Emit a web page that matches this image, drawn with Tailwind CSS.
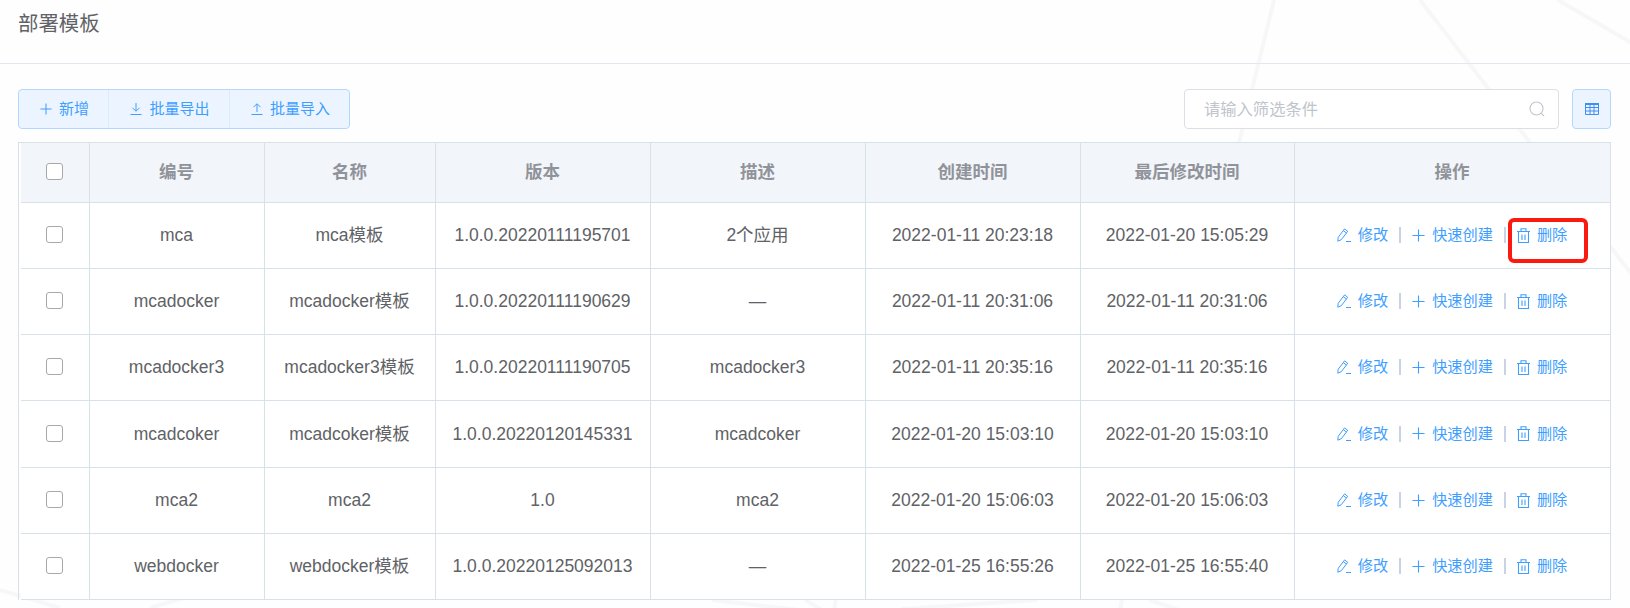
<!DOCTYPE html>
<html lang="zh-CN">
<head>
    <meta charset="UTF-8">
    <title>部署模板</title>
    <script src="https://cdn.jsdelivr.net/npm/@tailwindcss/browser@4"></script>
</head>
<body class="bg-[#fefefe] font-['Liberation_Sans','Noto_Sans_CJK_SC',sans-serif] text-[#606266] overflow-hidden">

    <!-- icons -->
    <svg class="hidden">
        <symbol id="i-edit" viewBox="0 0 14 14"><path fill="none" stroke="currentColor" stroke-width="1" d="M.8 13.2 1.2 9.3 7.6.9l3.1 2.4-6.4 8.4zM6.3 2.6l3.1 2.4M9 13.5h5"/></symbol>
        <symbol id="i-plus" viewBox="0 0 14 14"><path fill="none" stroke="currentColor" stroke-width="1.2" d="M7 .5v13M.5 7h13"/></symbol>
        <symbol id="i-trash" viewBox="0 0 13 15"><path fill="none" stroke="currentColor" stroke-width="1.1" d="M0 3.5h13M1.5 3.5v11h10v-11M4 3.5V.8h5v2.7M5 6.5v5.5M8 6.5v5.5"/></symbol>
    </svg>

    <div class="relative w-[1630px] h-[608px]">
        <!-- faint background lines -->
        <svg class="absolute inset-0 pointer-events-none" width="1630" height="608" fill="none" stroke="#f7f7f7" stroke-width="4">
            <path d="M1274 0 1225 200M1420 0 1640 285M1558 0 1640 48M0 590 60 608M150 608 190 596M712 600 800 610M805 600 822 610M836 600 834 610M902 609 1037 600M1122 600 1120 610M1149 600 1179 610"/>
        </svg>

        <div class="relative">
            <header class="h-[64px] border-b border-[#e4e7ed] pl-[18px] pt-[9px]">
                <h1 class="text-[20.4px] leading-[30px] font-normal">部署模板</h1>
            </header>

            <div class="px-[18px] pt-[25px]">
                <!-- toolbar -->
                <div class="flex items-center justify-between w-[1593px] h-[40px]">
                    <div class="flex h-[40px] text-[15px] text-[#409eff] bg-[#ecf5ff] border border-[#b3d8ff] rounded-[4px]">
                        <button class="flex items-center gap-[7px] w-[90px] pl-[2px] justify-center border-r border-[#d9ecff]">
                            <svg class="w-[12px] h-[12px]"><use href="#i-plus"/></svg>新增
                        </button>
                        <button class="flex items-center gap-[7px] w-[121px] pl-[2px] justify-center border-r border-[#d9ecff]">
                            <svg class="w-[12px] h-[12px]" viewBox="0 0 12 12" fill="none" stroke="currentColor"><path d="M6 0v8M2.5 4.8 6 8.3l3.5-3.5M.5 11.5h11"/></svg>批量导出
                        </button>
                        <button class="flex items-center gap-[7px] w-[119px] pl-[2px] justify-center">
                            <svg class="w-[12px] h-[12px]" viewBox="0 0 12 12" fill="none" stroke="currentColor"><path d="M6 9V1M2.5 4.2 6 .7l3.5 3.5M.5 11.5h11"/></svg>批量导入
                        </button>
                    </div>
                    <div class="flex items-center gap-[13px]">
                        <div class="flex items-center justify-between w-[375px] h-[40px] pl-[19px] pr-[13px] bg-white border border-[#dcdfe6] rounded-[4px]">
                            <span class="text-[16.3px] text-[#c0c4cc]">请输入筛选条件</span>
                            <svg class="w-[16px] h-[16px] text-[#c0c4cc]" viewBox="0 0 16 16" fill="none" stroke="currentColor" stroke-width="1.1"><circle cx="7.5" cy="7.5" r="6.5"/><path d="m12.3 12.3 2.7 2.7"/></svg>
                        </div>
                        <button class="flex items-center justify-center w-[39px] h-[40px] bg-[#ecf5ff] border border-[#b3d8ff] rounded-[4px] text-[#3f8ef5]">
                            <svg class="w-[14px] h-[12px]" viewBox="0 0 14 12" fill="none" stroke="currentColor"><path stroke-width="2" d="M0 1h14"/><path d="M.5 1v10.5h13V1M.5 4.5h13M.5 8h13M5 1v10.5M9 1v10.5"/></svg>
                        </button>
                    </div>
                </div>

                <!-- table -->
                <div class="relative mt-[13px] w-[1593px] border-l border-t border-[#d8e0e8] pl-[2px]">
                    <table class="table-fixed border-separate border-spacing-0 w-[1590px] text-[17.5px] text-center">
                        <colgroup>
                            <col class="w-[69px]"><col class="w-[175px]"><col class="w-[171px]"><col class="w-[215px]"><col class="w-[215px]"><col class="w-[215px]"><col class="w-[214px]"><col>
                        </colgroup>
                        <thead class="bg-[#f2f5fa] text-[#909399]">
                            <tr class="h-[60px] [&>th]:pr-[1px] [&>th]:border-r [&>th]:border-b [&>th]:border-[#d8e0e8] [&>th]:font-bold">
                                <th><span class="block ml-[25px] mb-[2px] w-[17px] h-[17px] bg-white border border-[#a8a8a8] rounded-[3px]"></span></th>
                                <th>编号</th><th>名称</th><th>版本</th><th>描述</th><th>创建时间</th><th>最后修改时间</th><th>操作</th>
                            </tr>
                        </thead>
                        <tbody class="bg-white [&_td]:pr-[1px] [&_td]:border-r [&_td]:border-b [&_td]:border-[#d8e0e8] [&_tr]:h-[66px]">
                            <tr>
                                <td><span class="block ml-[25px] mb-[2px] w-[17px] h-[17px] border border-[#a8a8a8] rounded-[3px]"></span></td>
                                <td>mca</td><td>mca模板</td><td>1.0.0.20220111195701</td><td>2个应用</td><td>2022-01-11 20:23:18</td><td>2022-01-20 15:05:29</td>
                                <td><div class="flex items-center justify-center text-[15.2px] text-[#409eff]">
                                    <svg class="w-[14px] h-[14px] mr-[7px]"><use href="#i-edit"/></svg>修改<i class="w-[2px] h-[16px] mx-[11px] bg-[#c9d3e3]"></i>
                                    <svg class="w-[13px] h-[13px] mr-[7px]"><use href="#i-plus"/></svg>快速创建<i class="w-[2px] h-[16px] mx-[11px] bg-[#c9d3e3]"></i>
                                    <svg class="w-[13px] h-[15px] mr-[7px]"><use href="#i-trash"/></svg>删除
                                </div></td>
                            </tr>
                            <tr>
                                <td><span class="block ml-[25px] mb-[2px] w-[17px] h-[17px] border border-[#a8a8a8] rounded-[3px]"></span></td>
                                <td>mcadocker</td><td>mcadocker模板</td><td>1.0.0.20220111190629</td><td>—</td><td>2022-01-11 20:31:06</td><td>2022-01-11 20:31:06</td>
                                <td><div class="flex items-center justify-center text-[15.2px] text-[#409eff]">
                                    <svg class="w-[14px] h-[14px] mr-[7px]"><use href="#i-edit"/></svg>修改<i class="w-[2px] h-[16px] mx-[11px] bg-[#c9d3e3]"></i>
                                    <svg class="w-[13px] h-[13px] mr-[7px]"><use href="#i-plus"/></svg>快速创建<i class="w-[2px] h-[16px] mx-[11px] bg-[#c9d3e3]"></i>
                                    <svg class="w-[13px] h-[15px] mr-[7px]"><use href="#i-trash"/></svg>删除
                                </div></td>
                            </tr>
                            <tr>
                                <td><span class="block ml-[25px] mb-[2px] w-[17px] h-[17px] border border-[#a8a8a8] rounded-[3px]"></span></td>
                                <td>mcadocker3</td><td>mcadocker3模板</td><td>1.0.0.20220111190705</td><td>mcadocker3</td><td>2022-01-11 20:35:16</td><td>2022-01-11 20:35:16</td>
                                <td><div class="flex items-center justify-center text-[15.2px] text-[#409eff]">
                                    <svg class="w-[14px] h-[14px] mr-[7px]"><use href="#i-edit"/></svg>修改<i class="w-[2px] h-[16px] mx-[11px] bg-[#c9d3e3]"></i>
                                    <svg class="w-[13px] h-[13px] mr-[7px]"><use href="#i-plus"/></svg>快速创建<i class="w-[2px] h-[16px] mx-[11px] bg-[#c9d3e3]"></i>
                                    <svg class="w-[13px] h-[15px] mr-[7px]"><use href="#i-trash"/></svg>删除
                                </div></td>
                            </tr>
                            <tr class="!h-[67px]">
                                <td><span class="block ml-[25px] mb-[2px] w-[17px] h-[17px] border border-[#a8a8a8] rounded-[3px]"></span></td>
                                <td>mcadcoker</td><td>mcadcoker模板</td><td>1.0.0.20220120145331</td><td>mcadcoker</td><td>2022-01-20 15:03:10</td><td>2022-01-20 15:03:10</td>
                                <td><div class="flex items-center justify-center text-[15.2px] text-[#409eff]">
                                    <svg class="w-[14px] h-[14px] mr-[7px]"><use href="#i-edit"/></svg>修改<i class="w-[2px] h-[16px] mx-[11px] bg-[#c9d3e3]"></i>
                                    <svg class="w-[13px] h-[13px] mr-[7px]"><use href="#i-plus"/></svg>快速创建<i class="w-[2px] h-[16px] mx-[11px] bg-[#c9d3e3]"></i>
                                    <svg class="w-[13px] h-[15px] mr-[7px]"><use href="#i-trash"/></svg>删除
                                </div></td>
                            </tr>
                            <tr>
                                <td><span class="block ml-[25px] mb-[2px] w-[17px] h-[17px] border border-[#a8a8a8] rounded-[3px]"></span></td>
                                <td>mca2</td><td>mca2</td><td>1.0</td><td>mca2</td><td>2022-01-20 15:06:03</td><td>2022-01-20 15:06:03</td>
                                <td><div class="flex items-center justify-center text-[15.2px] text-[#409eff]">
                                    <svg class="w-[14px] h-[14px] mr-[7px]"><use href="#i-edit"/></svg>修改<i class="w-[2px] h-[16px] mx-[11px] bg-[#c9d3e3]"></i>
                                    <svg class="w-[13px] h-[13px] mr-[7px]"><use href="#i-plus"/></svg>快速创建<i class="w-[2px] h-[16px] mx-[11px] bg-[#c9d3e3]"></i>
                                    <svg class="w-[13px] h-[15px] mr-[7px]"><use href="#i-trash"/></svg>删除
                                </div></td>
                            </tr>
                            <tr>
                                <td><span class="block ml-[25px] mb-[2px] w-[17px] h-[17px] border border-[#a8a8a8] rounded-[3px]"></span></td>
                                <td>webdocker</td><td>webdocker模板</td><td>1.0.0.20220125092013</td><td>—</td><td>2022-01-25 16:55:26</td><td>2022-01-25 16:55:40</td>
                                <td><div class="flex items-center justify-center text-[15.2px] text-[#409eff]">
                                    <svg class="w-[14px] h-[14px] mr-[7px]"><use href="#i-edit"/></svg>修改<i class="w-[2px] h-[16px] mx-[11px] bg-[#c9d3e3]"></i>
                                    <svg class="w-[13px] h-[13px] mr-[7px]"><use href="#i-plus"/></svg>快速创建<i class="w-[2px] h-[16px] mx-[11px] bg-[#c9d3e3]"></i>
                                    <svg class="w-[13px] h-[15px] mr-[7px]"><use href="#i-trash"/></svg>删除
                                </div></td>
                            </tr>
                        </tbody>
                    </table>
                    <!-- annotation over the first delete action -->
                    <div class="absolute left-[1489px] top-[75px] w-[80px] h-[45px] border-[4px] border-[#fa1a10] rounded-[6px] pointer-events-none"></div>
                </div>
            </div>
        </div>
    </div>

</body>
</html>
